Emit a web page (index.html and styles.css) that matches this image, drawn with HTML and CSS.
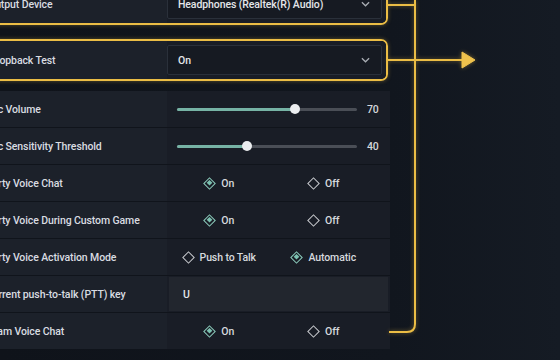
FILE: index.html
```html
<!DOCTYPE html>
<html>
    <head>
        <title>Voice Chat Settings</title>
        <link rel="stylesheet" href="styles.css">
    </head>
    <body>
        <div class="screen">
            <div class="settings">
                <!-- Highlighted device rows -->
                <div class="highlight highlight-first">
                    <div class="row row-framed">
                        <div class="row-label">Output Device</div>
                        <div class="row-value">
                            <div class="select">
                                <span>Headphones (Realtek(R) Audio)</span>
                                <svg class="chevron" viewBox="0 0 10 6"><path d="M1 1 L5 5 L9 1" /></svg>
                            </div>
                        </div>
                    </div>
                </div>
                <div class="highlight highlight-second">
                    <div class="row row-framed">
                        <div class="row-label">Loopback Test</div>
                        <div class="row-value">
                            <div class="select">
                                <span>On</span>
                                <svg class="chevron" viewBox="0 0 10 6"><path d="M1 1 L5 5 L9 1" /></svg>
                            </div>
                        </div>
                    </div>
                </div>

                <!-- Regular rows -->
                <div class="rows">
                    <div class="row">
                        <div class="row-label">Mic Volume</div>
                        <div class="row-value slider">
                            <div class="track">
                                <div class="fill" style="width: 65.5%"></div>
                                <div class="thumb" style="left: 65.5%"></div>
                            </div>
                            <span class="slider-num">70</span>
                        </div>
                    </div>
                    <div class="row">
                        <div class="row-label">Mic Sensitivity Threshold</div>
                        <div class="row-value slider">
                            <div class="track">
                                <div class="fill" style="width: 39%"></div>
                                <div class="thumb" style="left: 39%"></div>
                            </div>
                            <span class="slider-num">40</span>
                        </div>
                    </div>
                    <div class="row">
                        <div class="row-label">Party Voice Chat</div>
                        <div class="row-value options">
                            <div class="option"><span class="diamond selected"></span>On</div>
                            <div class="option"><span class="diamond"></span>Off</div>
                        </div>
                    </div>
                    <div class="row">
                        <div class="row-label">Party Voice During Custom Game</div>
                        <div class="row-value options">
                            <div class="option"><span class="diamond selected"></span>On</div>
                            <div class="option"><span class="diamond"></span>Off</div>
                        </div>
                    </div>
                    <div class="row">
                        <div class="row-label">Party Voice Activation Mode</div>
                        <div class="row-value options">
                            <div class="option"><span class="diamond"></span>Push to Talk</div>
                            <div class="option"><span class="diamond selected"></span>Automatic</div>
                        </div>
                    </div>
                    <div class="row">
                        <div class="row-label">Current push-to-talk (PTT) key</div>
                        <div class="row-value">
                            <div class="keybox">U</div>
                        </div>
                    </div>
                    <div class="row">
                        <div class="row-label">Team Voice Chat</div>
                        <div class="row-value options">
                            <div class="option"><span class="diamond selected"></span>On</div>
                            <div class="option"><span class="diamond"></span>Off</div>
                        </div>
                    </div>
                </div>
            </div>

            <!-- Annotation lines drawn over the page -->
            <svg class="annotation" viewBox="0 0 560 360">
                <path d="M387 5 H416" />
                <path d="M415 -4 V324 Q415 332 407 332 H389" />
                <path d="M387 60 H464" />
                <path class="arrow" d="M462 52 L475 60 L462 68 Z" />
            </svg>
        </div>
    </body>
</html>
```

FILE: styles.css
```css
body {
    margin: 0;
    padding: 0;
    background: linear-gradient(90deg, #0f131a 0%, #11161e 70%, #151b24 100%);
    font-family: Roboto, 'Liberation Sans', sans-serif;
    font-size: 10.5px;
    font-weight: 500;
    letter-spacing: -0.1px;
    color: #d9dce1;
    overflow: hidden;
}

.screen {
    position: relative;
    width: 560px;
    height: 360px;
    overflow: hidden;
}

.settings {
    width: 420px;
    margin-left: -30px;
    display: flex;
    flex-direction: column;
}

/* Gold frames */
.highlight {
    width: 418px;
    box-sizing: border-box;
    border: 2px solid #ebbd45;
    border-radius: 7px;
    box-shadow: 0 0 4px rgba(235, 189, 69, 0.35);
    overflow: hidden;
}

.highlight-first {
    margin-top: -17px;
}

.highlight-second {
    margin-top: 14px;
}

.rows {
    margin-top: 10px;
    display: flex;
    flex-direction: column;
    gap: 1px;
    background: #10141b;
}

.row {
    display: grid;
    grid-template-columns: 197px 1fr;
    height: 36px;
    background: #1c212a;
}

.row-framed {
    grid-template-columns: 195px 1fr;
    height: 38px;
}

.row-label {
    display: flex;
    align-items: center;
    padding-left: 16px;
    white-space: nowrap;
}

.row-value {
    display: flex;
    align-items: center;
    background: #191d26;
}

/* Dropdown */
.select {
    flex: 1;
    height: 30px;
    margin-right: 4px;
    box-sizing: border-box;
    display: flex;
    align-items: center;
    justify-content: space-between;
    padding: 0 11px 0 10px;
    background: #161a22;
    border: 1px solid #2a303a;
    border-radius: 2px;
    color: #e4e6ea;
}

.chevron {
    width: 9px;
    height: 6px;
    fill: none;
    stroke: #a9adb4;
    stroke-width: 1.4;
}

/* Sliders */
.slider {
    gap: 10px;
    padding: 0 12px 0 10px;
}

.track {
    position: relative;
    flex: 1;
    height: 3px;
    border-radius: 2px;
    background: #4a4e56;
}

.fill {
    height: 100%;
    border-radius: 2px;
    background: #76b3a5;
}

.thumb {
    position: absolute;
    top: 50%;
    width: 10px;
    height: 10px;
    margin: -5px 0 0 -5px;
    border-radius: 50%;
    background: #eceef0;
}

.slider-num {
    width: 11px;
    color: #d4d7db;
}

/* Diamond radio options */
.options {
    display: grid;
    grid-template-columns: 1fr 1fr;
    padding-right: 14px;
}

.option {
    display: flex;
    align-items: center;
    justify-content: center;
    gap: 6px;
    color: #d6d9de;
}

.diamond {
    position: relative;
    width: 9px;
    height: 9px;
    box-sizing: border-box;
    border: 1.5px solid #c9cbcf;
    transform: rotate(45deg);
    margin: 0 1px;
}

.diamond.selected {
    border-color: #8ccdbd;
}

.diamond.selected::after {
    content: '';
    position: absolute;
    left: 1px;
    top: 1px;
    width: 4px;
    height: 4px;
    background: #7cc2b1;
}

/* Key field */
.keybox {
    flex: 1;
    height: 34px;
    margin: 0 2px;
    display: flex;
    align-items: center;
    padding-left: 14px;
    background: #22262e;
    color: #e4e6ea;
}

/* Overlay lines */
.annotation {
    position: absolute;
    left: 0;
    top: 0;
    width: 560px;
    height: 360px;
    fill: none;
    stroke: #ebbd45;
    stroke-width: 2;
    filter: drop-shadow(0 0 2px rgba(235, 189, 69, 0.45));
}

.annotation .arrow {
    fill: #efc24d;
    stroke: #efc24d;
    stroke-width: 1;
    stroke-linejoin: round;
}
```
